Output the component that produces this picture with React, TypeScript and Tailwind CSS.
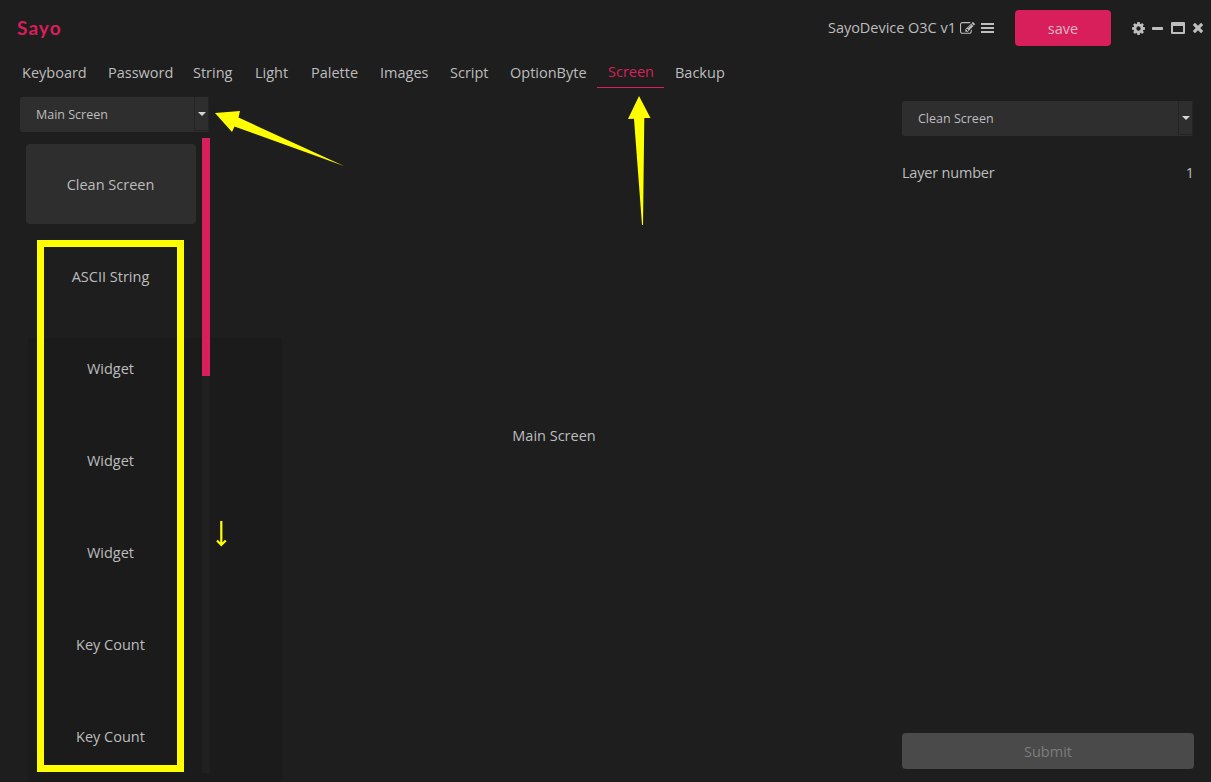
import React from "react";

const tabs = [
  { label: "Keyboard", width: "w-[64px]" },
  { label: "Password", width: "w-[63px]" },
  { label: "String", width: "w-[40px]" },
  { label: "Light", width: "w-[34px]" },
  { label: "Palette", width: "w-[47px]" },
  { label: "Images", width: "w-[48px]" },
  { label: "Script", width: "w-[38px]" },
  { label: "OptionByte", width: "w-[76px]" },
  { label: "Screen", width: "w-[45px]" },
  { label: "Backup", width: "w-[50px]" },
];

const layers = ["Clean Screen", "ASCII String", "Widget", "Widget", "Widget", "Key Count", "Key Count"];

function EditIcon() {
  return (
    <svg className="h-[15px] w-[15px]" viewBox="0 0 1792 1792" fill="currentColor">
      <path d="M888 1184l116-116-152-152-116 116v56h96v96h56zm440-720q-16-16-33 1l-350 350q-17 17-1 33t33-1l350-350q17-17 1-33zm80 594v190q0 119-84.500 203.500t-203.500 84.500h-832q-119 0-203.500-84.500t-84.500-203.500v-832q0-119 84.500-203.500t203.500-84.500h832q63 0 117 25 15 7 18 23 3 17-9 29l-49 49q-14 14-32 8-23-6-45-6h-832q-66 0-113 47t-47 113v832q0 66 47 113t113 47h832q66 0 113-47t47-113v-126q0-13 9-22l64-64q15-15 35-7t20 29zm-96-738l288 288-672 672h-288v-288zm444 132l-92 92-288-288 92-92q28-28 68-28t68 28l152 152q28 28 28 68t-28 68z" />
    </svg>
  );
}

function GearIcon() {
  return (
    <svg className="h-[13px] w-[13px]" viewBox="128 128 1536 1536" fill="currentColor">
      <path d="M1152 896q0-106-75-181t-181-75-181 75-75 181 75 181 181 75 181-75 75-181zm512-109v222q0 12-8 23t-20 13l-185 28q-19 54-39 91 35 50 107 138 10 12 10 25t-9 23q-27 37-99 108t-94 71q-12 0-26-9l-138-108q-44 23-91 38-16 136-29 186-7 28-36 28h-222q-14 0-24.500-8.500t-11.500-21.500l-28-184q-49-16-90-37l-141 107q-10 9-25 9-14 0-25-11-126-114-165-168-7-10-7-23 0-12 8-23 15-21 51-66.500t54-70.500q-27-50-41-99l-183-27q-13-2-21-12.500t-8-23.500v-222q0-12 8-23t19-13l186-28q14-46 39-92-40-57-107-138-10-12-10-24 0-10 9-23 26-36 98.500-107.500t94.500-71.500q13 0 26 10l138 107q44-23 91-38 16-136 29-186 7-28 36-28h222q14 0 24.500 8.500t11.500 21.500l28 184q49 16 90 37l142-107q9-9 24-9 13 0 25 10 129 119 165 170 7 8 7 22 0 12-8 23-15 21-51 66.500t-54 70.500q26 50 41 98l183 28q13 2 21 12.500t8 23.500z" fillRule="evenodd" />
    </svg>
  );
}

function CloseIcon() {
  return (
    <svg className="h-[10px] w-[10px]" viewBox="302 366 1188 1188" fill="currentColor">
      <path d="M1490 1322q0 40-28 68l-136 136q-28 28-68 28t-68-28l-294-294-294 294q-28 28-68 28t-68-28l-136-136q-28-28-28-68t28-68l294-294-294-294q-28-28-28-68t28-68l136-136q28-28 68-28t68 28l294 294 294-294q28-28 68-28t68 28l136 136q28 28 28 68t-28 68l-294 294 294 294q28 28 28 68z" />
    </svg>
  );
}

function Select({ value }: { value: string }) {
  return (
    <div className="flex h-[35px] w-full rounded-[2px] bg-[#2e2e2e]">
      <span className="flex-1 pl-4 text-[12.5px] leading-[36px]">{value}</span>
      <span className="flex h-[34px] w-[15px] items-center justify-center border-r border-b border-l border-[#242424]">
        <svg className="h-[4px] w-[8px]" viewBox="0 0 8 4" fill="#d6d6d6">
          <path d="M0 0h8L4 4z" />
        </svg>
      </span>
    </div>
  );
}

export default function App() {
  return (
    <div className="relative flex h-[782px] w-[1211px] flex-col overflow-hidden bg-[#1e1e1e] font-['Open_Sans','Noto_Sans',sans-serif] text-[14.5px] text-[#bdbdbd]">
      <div className="pointer-events-none absolute bottom-0 left-[28px] top-[338px] w-[254px] bg-[#1b1b1b]" />
      <header className="relative flex h-[57px] shrink-0 items-center pb-px pl-[17px] pr-[8px]">
        <h1 className="flex-1 font-['Lato',sans-serif] text-[19px] font-bold tracking-[1.1px] text-[#d81e5b]">Sayo</h1>
        <span className="w-[128px] whitespace-nowrap tracking-[-0.03px]">SayoDevice O3C v1</span>
        <span className="ml-[4px] flex">
          <EditIcon />
        </span>
        <svg className="ml-[6px] h-[10px] w-[13px]" viewBox="0 0 13 10" fill="currentColor">
          <path d="M0 0h13v2H0zM0 4h13v2H0zM0 8h13v2H0z" />
        </svg>
        <button className="ml-[21px] h-[36px] w-[96px] rounded-[4px] bg-[#d81e5b] pt-px text-[#ddb8c4]">save</button>
        <div className="ml-[21px] flex items-center">
          <GearIcon />
          <svg className="ml-[7px] h-[3px] w-[11px]" viewBox="0 0 11 3" fill="currentColor">
            <rect width="11" height="3" rx="0.8" />
          </svg>
          <svg className="ml-[8px] h-[12px] w-[14px]" viewBox="0 0 14 12" fill="currentColor" fillRule="evenodd">
            <path d="M1 0h12q1 0 1 1v10q0 1-1 1H1q-1 0-1-1V1q0-1 1-1zM2 4v6h10V4z" />
          </svg>
          <span className="ml-[8px] flex">
            <CloseIcon />
          </span>
        </div>
      </header>
      <nav className="relative flex h-[31px] shrink-0 pl-[11px]">
        {tabs.map((tab) => (
          <div
            key={tab.label}
            className={
              tab.label === "Screen"
                ? "flex h-[31px] flex-col text-[#d81e5b]"
                : "h-[31px] leading-[31px]"
            }
          >
            <span className={tab.label === "Screen" ? "block h-[30px] px-[11px] leading-[29px]" : "block px-[11px]"}>
              <span className={`block whitespace-nowrap ${tab.width}`}>{tab.label}</span>
            </span>
            {tab.label === "Screen" && <span className="h-px bg-[#d81e5b]" />}
          </div>
        ))}
      </nav>
      <main className="relative flex min-h-0 flex-1">
        <aside className="flex w-[210px] shrink-0 flex-col pt-[9px]">
          <div className="ml-[20px] w-[189px]">
            <Select value="Main Screen" />
          </div>
          <div className="mt-[6px] flex h-[635px] justify-between pl-[26px]">
            <ul className="flex w-[170px] flex-col gap-3 pt-[6px]">
              {layers.map((name, i) => (
                <li
                  key={i}
                  className={`flex h-[80px] shrink-0 items-center justify-center rounded-[4px] pr-px pt-[2px] ${i === 0 ? "bg-[#2e2e2e]" : ""}`}
                >
                  {name}
                </li>
              ))}
            </ul>
            <div className="w-[8px] bg-[#202020]">
              <div className="h-[238px] bg-[#d81e5b]" />
            </div>
          </div>
        </aside>
        <section className="flex w-[688px] items-center justify-center pt-px">Main Screen</section>
        <aside className="flex w-[296px] flex-col pl-[4px] pt-[13px]">
          <div className="w-[291px]">
            <Select value="Clean Screen" />
          </div>
          <div className="mt-[25px] flex h-[24px] w-[292px] items-center justify-between">
            <span className="tracking-[-0.2px]">Layer number</span>
            <span>1</span>
          </div>
          <button className="mb-[13px] mt-auto h-[36px] w-[292px] rounded-[4px] bg-[#4a4a4a] pt-[2px] text-[#7d7d7d]">Submit</button>
        </aside>
      </main>
      <div className="pointer-events-none absolute left-[37px] top-[240px] h-[532px] w-[147px] border-[7px] border-[#ffff00]" />
      <svg className="pointer-events-none absolute inset-0 h-full w-full" viewBox="0 0 1211 782" fill="#ffff00">
        <path d="M215 113L240 111L238.500 117.500L344 166L234.500 126.500L232 132z" />
        <path d="M639 96L650.500 118H644.300L643 225H642L634 118.700L628 119z" />
        <path d="M221.300 521V544M217 540.500L221.300 545L225.800 540.500" fill="none" stroke="#ffff00" strokeWidth="2.2" />
      </svg>
    </div>
  );
}
